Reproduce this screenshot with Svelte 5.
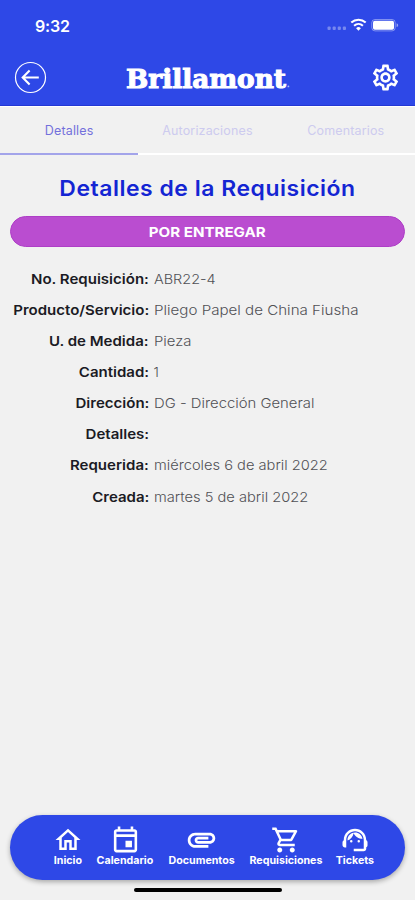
<script>
	let activeTab = $state('Detalles');

	const tabs = ['Detalles', 'Autorizaciones', 'Comentarios'];

	// stretch widens the value text horizontally
	const fields = [
		{ label: 'No. Requisición:', value: 'ABR22-4', stretch: 1.07 },
		{ label: 'Producto/Servicio:', value: 'Pliego Papel de China Fiusha', stretch: 1.12 },
		{ label: 'U. de Medida:', value: 'Pieza', stretch: 1.1 },
		{ label: 'Cantidad:', value: '1', stretch: 1 },
		{ label: 'Dirección:', value: 'DG - Dirección General', stretch: 1.1 },
		{ label: 'Detalles:', value: '', stretch: 1 },
		{ label: 'Requerida:', value: 'miércoles 6 de abril 2022', stretch: 1.085 },
		{ label: 'Creada:', value: 'martes 5 de abril 2022', stretch: 1.085 }
	];

	const navItems = [
		{
			name: 'Inicio',
			width: 30,
			size: 30,
			path: 'M12 5.69l5 4.5V18h-2v-6H9v6H7v-7.81l5-4.5M12 3L2 12h3v8h6v-6h2v6h6v-8h3L12 3z'
		},
		{
			name: 'Calendario',
			width: 59,
			size: 31,
			path: 'M19 4h-1V2h-2v2H8V2H6v2H5c-1.11 0-1.99.9-1.99 2L3 20c0 1.1.89 2 2 2h14c1.1 0 2-.9 2-2V6c0-1.1-.9-2-2-2zm0 16H5V10h14v10zm0-12H5V6h14v2zM12 13h5v5h-5z'
		},
		{
			name: 'Documentos',
			width: 69,
			size: 33,
			path: 'M2 12.5C2 9.46 4.46 7 7.5 7H18c2.21 0 4 1.79 4 4s-1.79 4-4 4H9.5C8.12 15 7 13.88 7 12.5S8.12 10 9.5 10H17v2H9.41c-.55 0-.55 1 0 1H18c1.1 0 2-.9 2-2s-.9-2-2-2H7.5C5.57 9 4 10.57 4 12.5S5.57 16 7.5 16H17v2H7.5C4.46 18 2 15.54 2 12.5z'
		},
		{
			name: 'Requisiciones',
			width: 74,
			size: 30,
			path: 'M15.55 13c.75 0 1.41-.41 1.75-1.03l3.58-6.49A.996.996 0 0020.01 4H5.21l-.94-2H1v2h2l3.6 7.59-1.35 2.44C4.52 15.37 5.48 17 7 17h12v-2H7l1.1-2h7.45zM6.16 6h12.15l-2.76 5H8.53L6.16 6zM7 18c-1.1 0-1.99.9-1.99 2S5.9 22 7 22s2-.9 2-2-.9-2-2-2zm10 0c-1.1 0-1.99.9-1.99 2s.89 2 1.99 2 2-.9 2-2-.9-2-2-2z'
		},
		{
			name: 'Tickets',
			width: 39,
			size: 30,
			path: 'M21 12.22C21 6.73 16.74 3 12 3c-4.69 0-9 3.65-9 9.28-.6.34-1 .98-1 1.72v2c0 1.1.9 2 2 2h1v-6.1c0-3.87 3.13-7 7-7s7 3.13 7 7V19h-8v2h8c1.1 0 2-.9 2-2v-1.22c.59-.31 1-.92 1-1.64v-2.3c0-.7-.41-1.31-1-1.62zM8 13a1 1 0 1 0 2 0a1 1 0 1 0-2 0zM14 13a1 1 0 1 0 2 0a1 1 0 1 0-2 0zM18 11.03C17.52 8.18 15.04 6 12.05 6c-3.03 0-6.29 2.51-6.03 6.45 2.47-1.01 4.33-3.21 4.86-5.89 1.31 2.63 4 4.44 7.12 4.47z'
		}
	];
</script>

<div class="screen">
	<header class="header">
		<div class="status">
			<span class="time">9:32</span>
			<svg class="status-icons" width="74" height="16" viewBox="0 0 74 16" fill="#fff">
				<g opacity="0.35">
					<rect x="0.5" y="9.5" width="3.2" height="3.4" rx="1" />
					<rect x="5.6" y="9.5" width="3.2" height="3.4" rx="1" />
					<rect x="10.7" y="9.5" width="3.2" height="3.4" rx="1" />
					<rect x="15.8" y="9.5" width="3.2" height="3.4" rx="1" />
				</g>
				<g fill="none" stroke="#fff" stroke-width="2.1">
					<path d="M24.3 5.6a10.6 10.6 0 0 1 14.4 0" />
					<path d="M27.1 8.7a6.6 6.6 0 0 1 8.8 0" />
				</g>
				<path d="M31.5 13.8l-2.4-2.6a3.5 3.5 0 0 1 4.8 0z" />
				<rect x="44.8" y="2.5" width="23.4" height="11.4" rx="3.2" fill="none" stroke="#fff" stroke-opacity="0.4" />
				<rect x="46" y="3.8" width="21" height="9" rx="1.8" />
				<path d="M69.6 6.3v3.8q1.6-.5 1.6-1.9t-1.6-1.9z" opacity="0.5" />
			</svg>
		</div>
		<div class="toolbar">
			<button class="icon-btn" aria-label="Regresar">
				<svg width="33" height="33" viewBox="0 0 33 33" fill="none" stroke="#fff">
					<circle cx="16.5" cy="16.5" r="15" stroke-width="1.2" />
					<path d="M24.8 16.5H9.3M15.6 9.6l-6.9 6.9 6.9 6.9" stroke-width="2.1" />
				</svg>
			</button>
			<svg class="logo" width="168" height="34" viewBox="0 0 168 34" role="img" aria-label="Brillamont">
				<text x="1" y="26.5" textLength="160" lengthAdjust="spacingAndGlyphs">Brillamont</text>
				<circle cx="163.4" cy="25.4" r="0.9" fill="#fff" opacity="0.6" />
			</svg>
			<button class="icon-btn" aria-label="Ajustes">
				<svg width="31" height="31" viewBox="0 0 24 24" fill="#fff">
					<path
						d="M19.43 12.98c.04-.32.07-.64.07-.98s-.03-.66-.07-.98l2.11-1.65c.19-.15.24-.42.12-.64l-2-3.46c-.09-.16-.26-.25-.44-.25-.06 0-.12.01-.17.03l-2.49 1c-.52-.4-1.08-.73-1.69-.98l-.38-2.65C14.46 2.18 14.25 2 14 2h-4c-.25 0-.46.18-.49.42l-.38 2.65c-.61.25-1.17.59-1.69.98l-2.49-1c-.06-.02-.12-.03-.18-.03-.17 0-.34.09-.43.25l-2 3.46c-.13.22-.07.49.12.64l2.11 1.65c-.04.32-.07.65-.07.98s.03.66.07.98l-2.11 1.65c-.19.15-.24.42-.12.64l2 3.46c.09.16.26.25.44.25.06 0 .12-.01.17-.03l2.49-1c.52.4 1.08.73 1.69.98l.38 2.65c.03.24.24.42.49.42h4c.25 0 .46-.18.49-.42l.38-2.65c.61-.25 1.17-.59 1.69-.98l2.49 1c.06.02.12.03.18.03.17 0 .34-.09.43-.25l2-3.46c.12-.22.07-.49-.12-.64l-2.11-1.65zm-1.98-1.71c.04.31.05.52.05.73 0 .21-.02.43-.05.73l-.14 1.13.89.7 1.08.84-.7 1.21-1.27-.51-1.04-.42-.9.68c-.43.32-.84.56-1.25.73l-1.06.43-.16 1.13-.2 1.35h-1.4l-.19-1.35-.16-1.13-1.06-.43c-.43-.18-.83-.41-1.23-.71l-.91-.7-1.06.43-1.27.51-.7-1.21 1.08-.84.89-.7-.14-1.13c-.03-.31-.05-.54-.05-.74s.02-.43.05-.73l.14-1.13-.89-.7-1.08-.84.7-1.21 1.27.51 1.04.42.9-.68c.43-.32.84-.56 1.25-.73l1.06-.43.16-1.13.2-1.35h1.39l.19 1.35.16 1.13 1.06.43c.43.18.83.41 1.23.71l.91.7 1.06-.43 1.27-.51.7 1.21-1.07.85-.89.7.14 1.13zM12 8c-2.21 0-4 1.79-4 4s1.79 4 4 4 4-1.79 4-4-1.79-4-4-4zm0 6c-1.1 0-2-.9-2-2s.9-2 2-2 2 .9 2 2-.9 2-2 2z"
					/>
				</svg>
			</button>
		</div>
	</header>

	<div class="tabs">
		{#each tabs as tab}
			<button class="tab" class:active={tab === activeTab} onclick={() => (activeTab = tab)}>{tab}</button>
		{/each}
	</div>

	<main class="content">
		<h1>Detalles de la Requisición</h1>
		<div class="badge"><span>POR ENTREGAR</span></div>
		<dl class="fields">
			{#each fields as field}
				<dt>{field.label}</dt>
				<dd style="transform: scaleX({field.stretch})">{field.value}</dd>
			{/each}
		</dl>
	</main>

	<nav class="nav">
		{#each navItems as item}
			<button class="nav-item" style="width: {item.width}px">
				<span class="nav-icon">
					<svg width={item.size} height={item.size} viewBox="0 0 24 24" fill="#fff">
						<path d={item.path} />
					</svg>
				</span>
				<span class="nav-label">{item.name}</span>
			</button>
		{/each}
	</nav>
	<div class="home-bar"></div>
</div>

<style>
	:global(body) {
		margin: 0;
		background: #f1f1f1;
	}

	.screen {
		width: 415px;
		height: 900px;
		display: flex;
		flex-direction: column;
		align-items: center;
		box-sizing: border-box;
		overflow: hidden;
		background: #f1f1f1;
		font-family: Inter, 'Open Sans', sans-serif;
	}

	button {
		padding: 0;
		border: none;
		background: none;
		font-family: inherit;
		cursor: pointer;
	}

	/* header */
	.header {
		width: 100%;
		height: 106px;
		box-sizing: border-box;
		background: #2e48e7;
		border-bottom: 1px solid #2438d4;
		color: #fff;
	}

	.status {
		height: 51px;
		padding: 0 14px 0 35px;
		display: flex;
		align-items: center;
		justify-content: space-between;
	}

	.time {
		font-size: 16px;
		font-weight: 600;
		line-height: 20px;
		letter-spacing: -0.2px;
	}

	.status-icons {
		margin-bottom: 1px;
	}

	.toolbar {
		height: 53px;
		padding: 0 14px;
		display: flex;
		align-items: center;
		justify-content: space-between;
	}

	.icon-btn {
		display: flex;
	}

	.logo text {
		font-family: 'DejaVu Serif', serif;
		font-size: 26.5px;
		font-weight: 700;
		fill: #fff;
		stroke: #fff;
		stroke-width: 1.1px;
	}

	/* tabs */
	.tabs {
		width: 100%;
		height: 49px;
		display: grid;
		grid-template-columns: repeat(3, 1fr);
		border-top: 1px solid #fff;
		box-sizing: border-box;
	}

	.tab {
		border-bottom: 2px solid #fff;
		font-size: 12.5px;
		letter-spacing: 0.15px;
		color: #cdcbef;
	}

	.tab.active {
		border-bottom-color: #a3a4ea;
		color: #7370dc;
	}

	/* content */
	.content {
		flex: 1;
		width: 100%;
		box-sizing: border-box;
		padding: 18px 10px 0;
	}

	h1 {
		margin: 0;
		font-size: 21.5px;
		font-weight: 600;
		line-height: 30px;
		letter-spacing: 0.5px;
		text-align: center;
		color: #1425d3;
		transform: scaleX(1.066);
	}

	.badge {
		height: 31px;
		margin: 13px 0 16px;
		border: 1px solid #ae3fc6;
		border-radius: 16px;
		box-sizing: border-box;
		background: #ba4dd0;
		color: #fff;
		font-size: 13.5px;
		font-weight: 700;
		line-height: 31px;
		text-align: center;
	}

	.badge span {
		display: inline-block;
		transform: scaleX(1.12);
	}

	.fields {
		margin: 0;
		display: grid;
		grid-template-columns: 139px 1fr;
		column-gap: 4.5px;
		grid-auto-rows: 31.15px;
		align-items: center;
		font-size: 13.5px;
		white-space: nowrap;
	}

	dt {
		justify-self: end;
		font-weight: 600;
		color: #1b1b24;
		transform: scaleX(1.113);
		transform-origin: right center;
	}

	dd {
		justify-self: start;
		margin: 0;
		font-weight: 300;
		color: #505055;
		transform-origin: left center;
	}

	/* bottom navigation */
	.nav {
		width: 395px;
		height: 65px;
		display: flex;
		justify-content: center;
		gap: 12.5px;
		box-sizing: border-box;
		padding: 8px 0 0 12px;
		border-radius: 33px;
		background: #2e48e7;
		box-shadow: 0 2px 5px rgba(0, 0, 0, 0.3);
	}

	.nav-item {
		display: flex;
		flex-direction: column;
		align-items: center;
		color: #fff;
	}

	.nav-icon {
		height: 33px;
		display: flex;
		align-items: center;
	}

	.nav-label {
		font-size: 10.5px;
		font-weight: 700;
		line-height: 10px;
		white-space: nowrap;
		transform: scaleX(1.015);
	}

	.home-bar {
		width: 148px;
		height: 4px;
		margin: 8px 0;
		border-radius: 2px;
		background: #000;
	}
</style>
